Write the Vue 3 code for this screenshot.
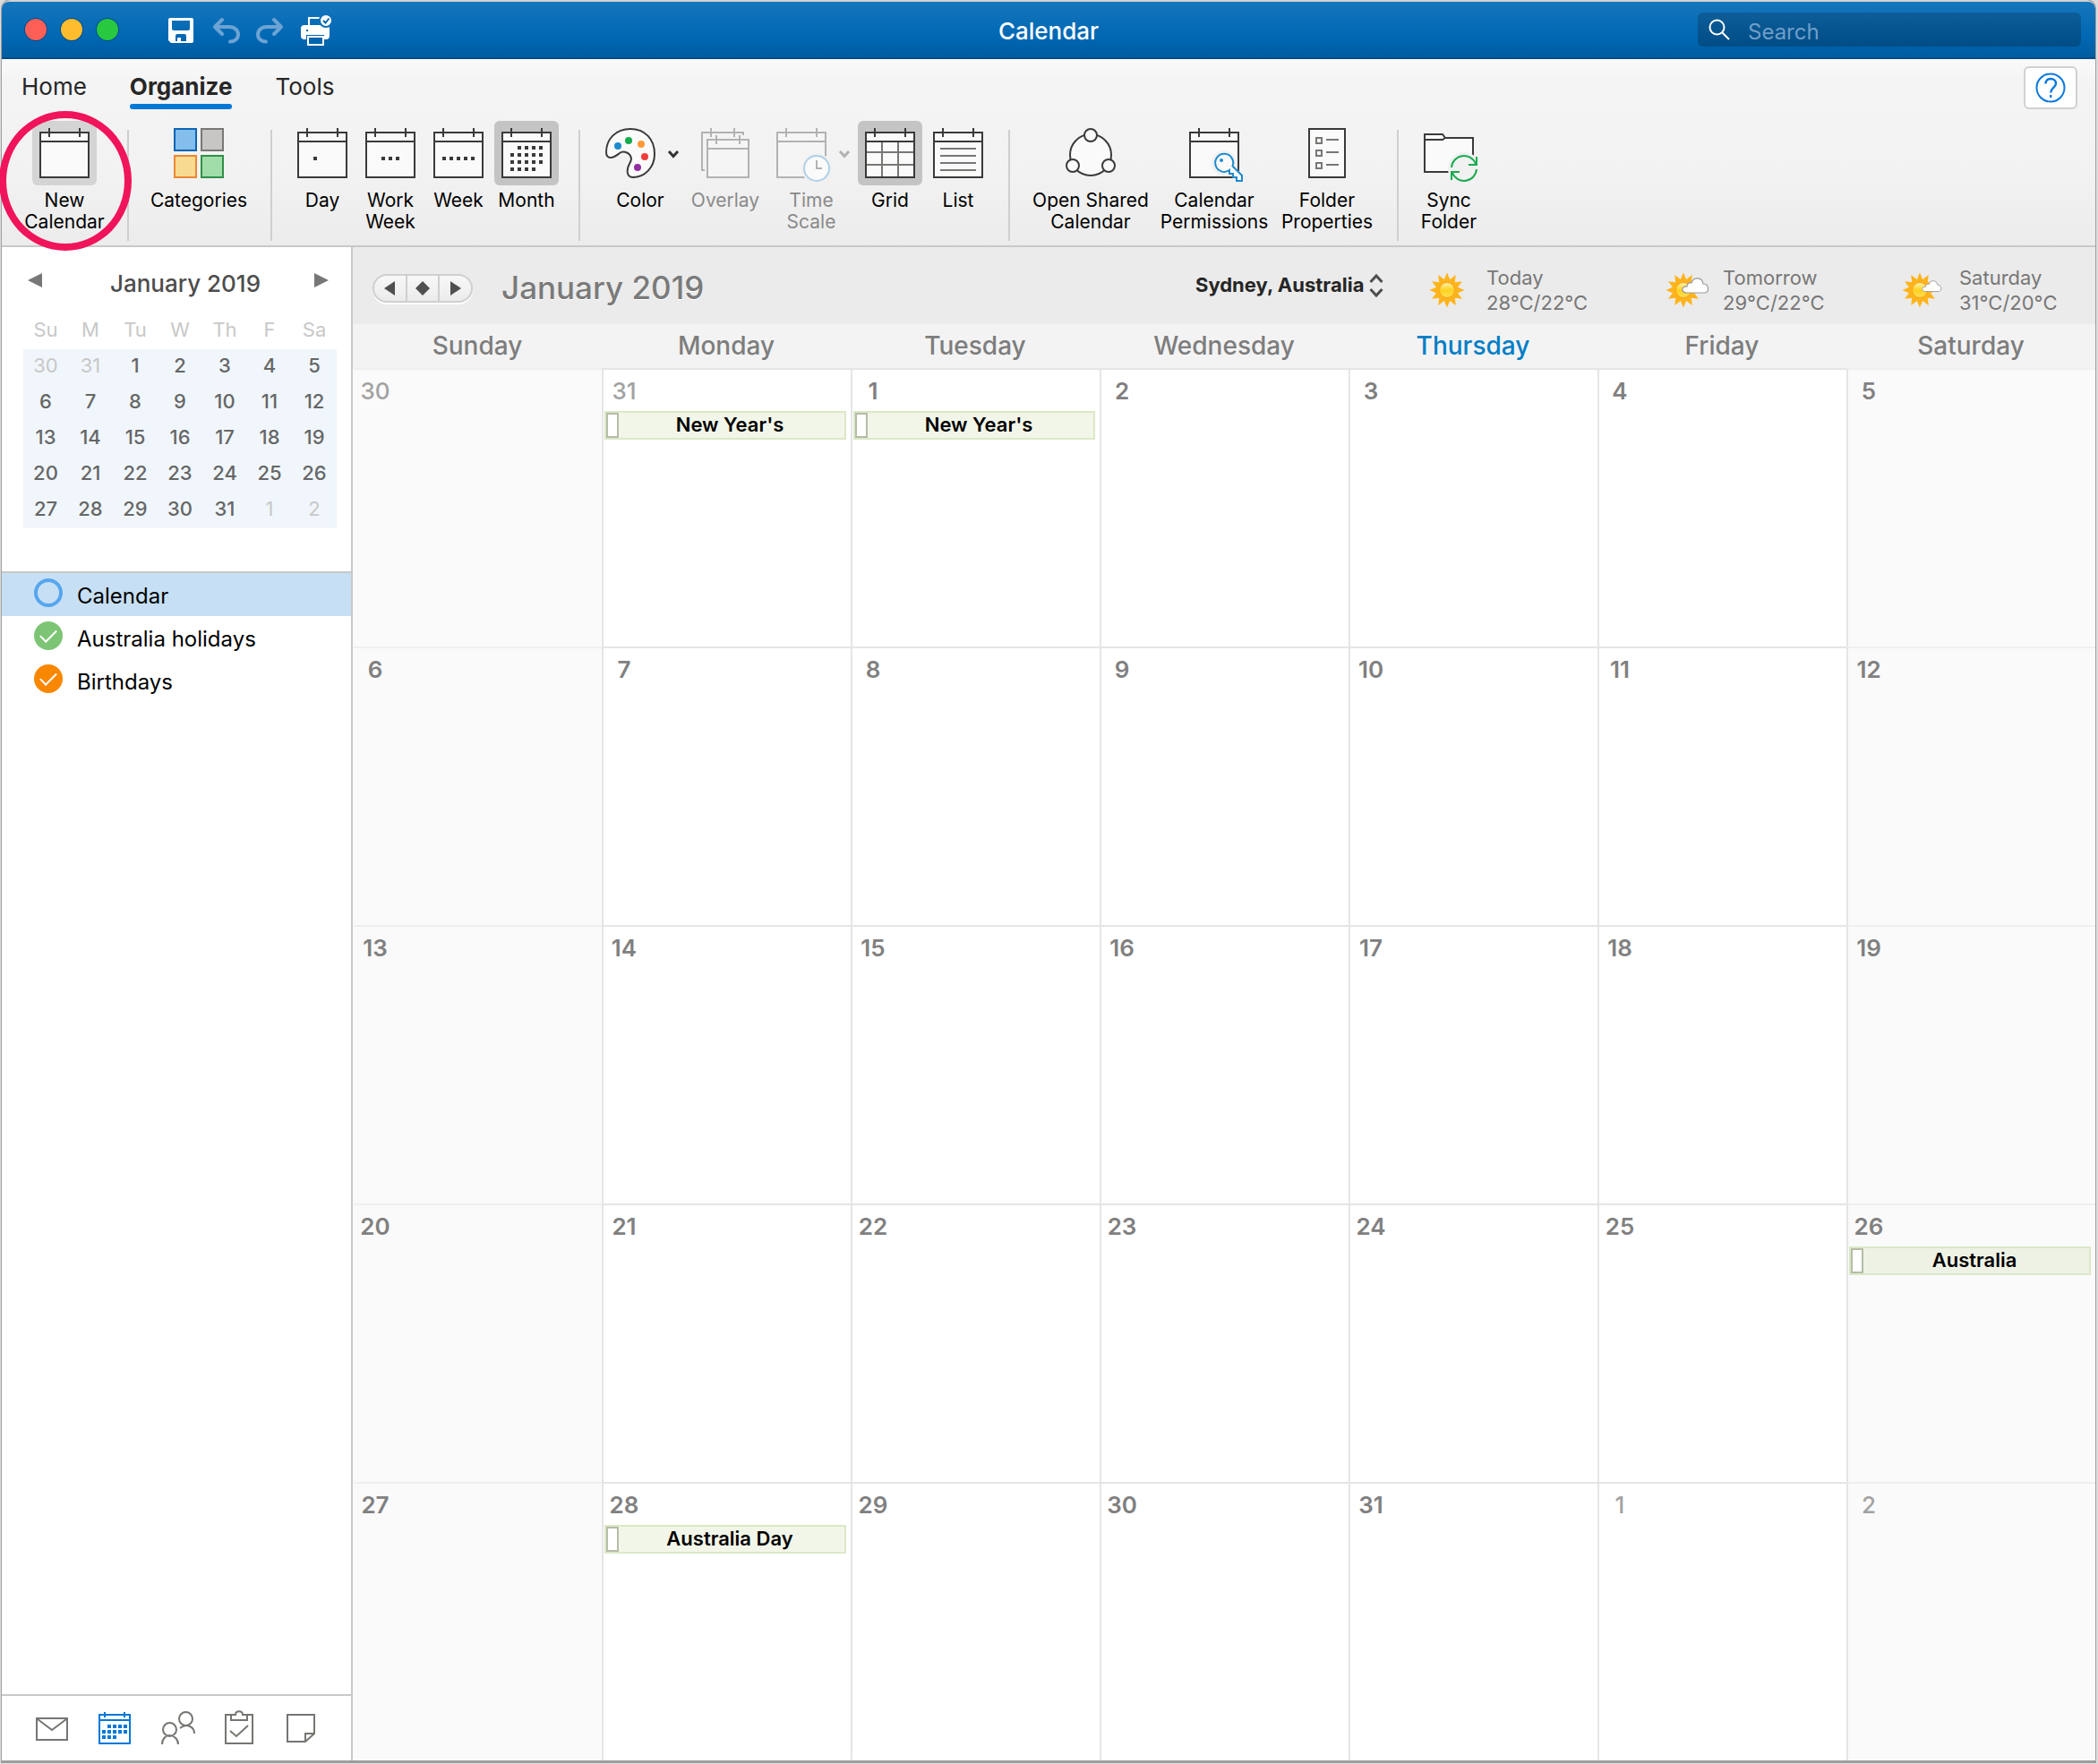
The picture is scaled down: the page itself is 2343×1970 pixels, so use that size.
<script setup>
import { ref } from 'vue'

const tabs = ['Home', 'Organize', 'Tools']
const activeTab = ref('Organize')

const dots = {
  day: [[20, 34]],
  work: [[20, 34], [28, 34], [36, 34]],
  week: [[12, 34], [20, 34], [28, 34], [36, 34], [44, 34]],
  month: [
    [20, 22], [28, 22], [36, 22], [44, 22],
    [12, 30], [20, 30], [28, 30], [36, 30], [44, 30],
    [12, 38], [20, 38], [28, 38], [36, 38], [44, 38],
    [12, 46], [20, 46], [28, 46], [36, 46]
  ]
}

const groups = [
  { name: 'create', items: [{ icon: 'new', lines: ['New', 'Calendar'], hover: true }] },
  { name: 'tags', items: [{ icon: 'categories', lines: ['Categories'] }] },
  {
    name: 'range',
    items: [
      { icon: 'day', lines: ['Day'] },
      { icon: 'work', lines: ['Work', 'Week'] },
      { icon: 'week', lines: ['Week'] },
      { icon: 'month', lines: ['Month'], on: true }
    ]
  },
  {
    name: 'view',
    items: [
      { icon: 'color', lines: ['Color'], menu: true },
      { icon: 'overlay', lines: ['Overlay'], off: true },
      { icon: 'scale', lines: ['Time', 'Scale'], off: true, menu: true },
      { icon: 'grid', lines: ['Grid'], on: true },
      { icon: 'list', lines: ['List'] }
    ]
  },
  {
    name: 'share',
    items: [
      { icon: 'shared', lines: ['Open Shared', 'Calendar'] },
      { icon: 'permissions', lines: ['Calendar', 'Permissions'] },
      { icon: 'properties', lines: ['Folder', 'Properties'] }
    ]
  },
  { name: 'sync', items: [{ icon: 'sync', lines: ['Sync', 'Folder'] }] }
]
const plainCalendars = ['new', 'day', 'work', 'week', 'month', 'scale', 'grid', 'list', 'permissions']

const events = { 1: "New Year's", 2: "New Year's", 27: 'Australia', 29: 'Australia Day' }
const weeks = Array.from({ length: 5 }, (_, w) =>
  Array.from({ length: 7 }, (_, d) => {
    const index = w * 7 + d
    const date = new Date(2018, 11, 30 + index)
    return {
      index,
      day: date.getDate(),
      outside: date.getMonth() !== 0,
      weekend: d === 0 || d === 6,
      event: events[index]
    }
  })
)
const shortDays = ['Su', 'M', 'Tu', 'W', 'Th', 'F', 'Sa']
const longDays = ['Sunday', 'Monday', 'Tuesday', 'Wednesday', 'Thursday', 'Friday', 'Saturday']

const calendars = ref([
  { name: 'Calendar', tone: 'blue', shown: false },
  { name: 'Australia holidays', tone: 'green', shown: true },
  { name: 'Birthdays', tone: 'orange', shown: true }
])

const forecast = [
  { day: 'Today', temp: '28°C/22°C', cloud: null },
  { day: 'Tomorrow', temp: '29°C/22°C', cloud: 'translate(17 6)' },
  { day: 'Saturday', temp: '31°C/20°C', cloud: 'translate(21 9) scale(.74)' }
]
const sunRays = Array.from({ length: 24 }, (_, i) => {
  const r = i % 2 ? 12.5 : 19.5
  const a = (i * Math.PI) / 12
  return `${(19 + r * Math.sin(a)).toFixed(1)},${(20 - r * Math.cos(a)).toFixed(1)}`
}).join(' ')

const modules = ['Mail', 'Calendar', 'People', 'Tasks', 'Notes']
</script>

<template>
  <div class="window">
    <header class="titlebar">
      <div class="lights">
        <button class="light red" aria-label="Close"></button>
        <button class="light yellow" aria-label="Minimize"></button>
        <button class="light green" aria-label="Zoom"></button>
      </div>
      <div class="quick">
        <button aria-label="Save">
          <svg width="30" height="28" viewBox="0 0 30 28"><path fill="#fff" fill-rule="evenodd" d="M2 0H26a2 2 0 0 1 2 2V26a2 2 0 0 1-2 2H3L0 25V2A2 2 0 0 1 2 0ZM4 3V12a2 2 0 0 0 2 2H22a2 2 0 0 0 2-2V3ZM8 26H10V22H14V26H20V20a2 2 0 0 0-2-2H10a2 2 0 0 0-2 2Z" /></svg>
        </button>
        <button aria-label="Undo">
          <svg width="32" height="28" viewBox="0 0 32 28" class="faded"><path d="M12 2 4 10l8 8M5 10H20c6 0 10 4 10 8.500s-4 8-9 8" /></svg>
        </button>
        <button aria-label="Redo">
          <svg width="32" height="28" viewBox="0 0 32 28" class="faded"><path d="M20 2l8 8-8 8M27 10H12c-6 0-10 4-10 8.500s4 8 9 8" /></svg>
        </button>
        <button aria-label="Print">
          <svg width="34" height="36" viewBox="0 0 34 36" fill="none" stroke="#fff">
            <path stroke-width="2" d="M9 13V4H24" />
            <rect x="1" y="13" width="30" height="14" rx="3" stroke-width="2" fill="#fff" />
            <path stroke="#0067b2" stroke-width="2" d="M6 18h2" />
            <rect x="7" y="24" width="18" height="10" stroke="#0064ae" stroke-width="2" />
            <rect x="8" y="25" width="17" height="9" stroke-width="2" fill="#0064ae" />
            <circle cx="28" cy="7" r="7" fill="#fff" stroke="#0c6fb8" stroke-width="2" />
            <path stroke="#0067b2" stroke-width="2" d="M25 7l2.500 2.500L31.500 4.500" />
          </svg>
        </button>
      </div>
      <h1>Calendar</h1>
      <label class="search">
        <svg width="24" height="24" viewBox="0 0 24 24" fill="none" stroke="#fff" stroke-width="2"><circle cx="9.500" cy="9.500" r="8" /><path d="M15.500 15.500 23 23" /></svg>
        <input type="search" placeholder="Search" aria-label="Search" />
      </label>
    </header>

    <div class="ribbon">
      <div class="tabrow">
        <nav class="tabs">
          <button v-for="t in tabs" :key="t" :class="{ active: t === activeTab }" @click="activeTab = t">{{ t }}</button>
        </nav>
        <button class="help" aria-label="Help">
          <svg width="34" height="34" viewBox="0 0 34 34" fill="none" stroke="#0a78dc" stroke-width="2"><circle cx="17" cy="17" r="15.500" /><path stroke-width="2.400" d="M11.500 12.500C11.500 9 14 7 17.200 7s5.800 2 5.800 5.200c0 4.500-5.800 5-5.800 10.300M17.200 25v3" /></svg>
        </button>
      </div>

      <div class="tools">
        <div v-for="g in groups" :key="g.name" class="group" :class="'group-' + g.name">
          <button v-for="it in g.items" :key="it.icon" class="tool" :class="['tool-' + it.icon, { on: it.on, hover: it.hover, menu: it.menu }]" :disabled="it.off">
            <span class="pic">
              <svg width="56" height="60" viewBox="0 0 56 60">
                <template v-if="plainCalendars.includes(it.icon)">
                  <path class="sheet" d="M1 5H55V55H1ZM1 15H55M11 0V10M45 0V10" />
                  <rect v-for="(p, i) in dots[it.icon] || []" :key="i" class="dot" :x="p[0] - 2" :y="p[1] - 2" width="4" height="4" />
                </template>
                <template v-if="it.icon === 'categories'">
                  <rect x="1" y="1" width="24" height="24" fill="#83beec" stroke="#0c64b4" stroke-width="2" />
                  <rect x="31" y="1" width="24" height="24" fill="#c8c6c4" stroke="#7a7876" stroke-width="2" />
                  <rect x="1" y="31" width="24" height="24" fill="#f8db8f" stroke="#ed8733" stroke-width="2" />
                  <rect x="31" y="31" width="24" height="24" fill="#a1dda9" stroke="#309048" stroke-width="2" />
                </template>
                <template v-if="it.icon === 'color'">
                  <path class="sheet" d="M1 27C1 12 12 1 28 1C44 1 55 12 55 29C55 44 44 55 31 55C25 55 24 50 25 45C26 40 29 38 29 34C28 27 20 25 16 28C12 31 10 33 6 33C2 33 1 30 1 27Z" />
                  <circle cx="14" cy="20" r="4" fill="#1e8bcd" /><circle cx="26" cy="14" r="4" fill="#18ab50" />
                  <circle cx="40" cy="18" r="4" fill="#ff9a37" /><circle cx="44" cy="32" r="4" fill="#ee3d3b" />
                  <circle cx="36" cy="44" r="4" fill="#922fa0" />
                </template>
                <template v-if="it.icon === 'overlay'">
                  <path class="line" d="M5 47H2V5H48V8M12 0V10M38 0V10" />
                  <path class="sheet" d="M8 13H54V55H8ZM8 23H54M18 8V18M44 8V18" />
                </template>
                <template v-if="it.icon === 'scale'">
                  <circle cx="45" cy="45" r="17" fill="#f1f1f1" />
                  <circle cx="45" cy="45" r="14" fill="#fafafa" stroke="#b0d0e8" stroke-width="2" />
                  <path class="line" d="M45 36V45H51" />
                </template>
                <path v-if="it.icon === 'grid'" class="inner" d="M19 16V54M37 16V54M2 27H54M2 41H54" />
                <path v-if="it.icon === 'list'" class="inner" d="M8 23H48M8 31H48M8 39H48M8 47H48" />
                <template v-if="it.icon === 'shared'">
                  <circle class="sheet" cx="28" cy="30" r="23" />
                  <circle class="sheet" cx="28" cy="8" r="7" /><circle class="sheet" cx="8" cy="42" r="7" /><circle class="sheet" cx="48" cy="42" r="7" />
                </template>
                <template v-if="it.icon === 'permissions'">
                  <path stroke="#f1f1f1" stroke-width="8" fill="none" d="M39 39m-10 0a10 10 0 1 0 20 0a10 10 0 1 0-20 0M47 46 60 58" />
                  <path fill="#fafafa" stroke="#1e8bcd" stroke-width="2" d="M48.500 42.500A10 10 0 1 0 45 47V51H49V55H53V59H59V53Z" />
                  <circle cx="36" cy="36" r="2" fill="#1e8bcd" />
                </template>
                <template v-if="it.icon === 'properties'">
                  <rect class="sheet" x="8" y="1" width="40" height="54" />
                  <path class="inner" d="M16 11H22V17H16ZM16 25H22V31H16ZM16 39H22V45H16ZM27 13H41M27 27H41M27 41H41" />
                </template>
                <template v-if="it.icon === 'sync'">
                  <path class="sheet" d="M1 49V7H21L24 11H55V49ZM1 13H21L24 11" />
                  <circle cx="45" cy="45" r="18" fill="#f1f1f1" />
                  <path fill="none" stroke="#18ab50" stroke-width="2" d="M31 44A14 14 0 0 1 58 40M59 46A14 14 0 0 1 32 50M59 32V41H50M31 58V49H40" />
                </template>
              </svg>
              <svg v-if="it.menu" class="caret" width="12" height="10" viewBox="0 0 12 10"><path d="M1 2 6 7.500 11 2" /></svg>
            </span>
            <span v-for="l in it.lines" :key="l" class="cap">{{ l }}</span>
          </button>
        </div>
      </div>
      <span class="highlight"></span>
    </div>

    <div class="body">
      <aside class="sidebar">
        <div class="minihead">
          <button aria-label="Previous month"><svg width="16" height="16" viewBox="0 0 16 16"><path d="M16 0V16L0 8Z" /></svg></button>
          <h2>January 2019</h2>
          <button aria-label="Next month"><svg width="16" height="16" viewBox="0 0 16 16"><path d="M0 0V16L16 8Z" /></svg></button>
        </div>
        <table class="mini">
          <thead>
            <tr><th v-for="d in shortDays" :key="d">{{ d }}</th></tr>
          </thead>
          <tbody>
            <tr v-for="(w, i) in weeks" :key="i">
              <td v-for="c in w" :key="c.index" :class="{ outside: c.outside }">{{ c.day }}</td>
            </tr>
          </tbody>
        </table>
        <ul class="calendars">
          <li v-for="(c, i) in calendars" :key="c.name" :class="{ selected: i === 0 }">
            <label :class="c.tone">
              <input v-model="c.shown" type="checkbox" />
              <span>{{ c.name }}</span>
            </label>
          </li>
        </ul>
        <nav class="modules">
          <button v-for="m in modules" :key="m" :aria-label="m" :class="{ current: m === 'Calendar' }">
            <svg width="38" height="40" viewBox="0 0 38 40" fill="none" stroke="currentColor" stroke-width="2">
              <path v-if="m === 'Mail'" d="M2 9H36V33H2ZM3 10 19 22 35 10" />
              <template v-if="m === 'Calendar'">
                <path d="M2 5H36V37H2ZM2 11H36M8 2V8M30 2V8" />
                <path stroke-width="4" stroke-dasharray="4 2" d="M11 18H34M5 24H34M5 30H21" />
              </template>
              <path v-if="m === 'People'" d="M2 38C2 32 6 28 10.500 28S20 32 20 38M3 21.500a7.500 7.500 0 1 0 15 0a7.500 7.500 0 1 0-15 0M21 9.500a7.500 7.500 0 1 0 15 0a7.500 7.500 0 1 0-15 0M22 20C29 14 38 18 38 26" />
              <path v-if="m === 'Tasks'" d="M8 5H3V37H33V5H27M9 5H14C14 0 22 0 22 5H27V11H9ZM8 23 15 29 28 17" />
              <path v-if="m === 'Notes'" d="M2 5H32V26L22 35H2ZM22 35V26H32" />
            </svg>
          </button>
        </nav>
      </aside>

      <main>
        <div class="viewhead">
          <div class="pager">
            <button aria-label="Previous"><svg width="12" height="16" viewBox="0 0 12 16"><path d="M12 0V16L0 8Z" /></svg></button>
            <button aria-label="Today"><svg width="16" height="16" viewBox="0 0 16 16"><path d="M8 0 16 8 8 16 0 8Z" /></svg></button>
            <button aria-label="Next"><svg width="12" height="16" viewBox="0 0 12 16"><path d="M0 0V16L12 8Z" /></svg></button>
          </div>
          <h2>January 2019</h2>
          <label class="place">
            <select aria-label="Weather location"><option>Sydney, Australia</option></select>
            <svg width="16" height="26" viewBox="0 0 16 26"><path d="M1.500 9 8 2l6.500 7M1.500 17 8 24l6.500-7" /></svg>
          </label>
          <div class="forecast">
            <div v-for="f in forecast" :key="f.day" class="outlook">
              <svg width="48" height="40" viewBox="0 0 48 40">
                <defs>
                  <linearGradient id="disc" x1="0" y1="0" x2="0" y2="1"><stop offset="0" stop-color="#fff3b0" /><stop offset=".5" stop-color="#ffd21f" /><stop offset="1" stop-color="#ffdf57" /></linearGradient>
                </defs>
                <polygon :points="sunRays" fill="#fdb41c" />
                <circle cx="19" cy="20" r="8.500" fill="url(#disc)" stroke="#f7a31a" />
                <path v-if="f.cloud" :transform="f.cloud" fill="#fff" stroke="#999" stroke-width="1.200" d="M5 17C-1 16 0 9 6 10C6 6 9 5 11 6C13-1 23-1 24 7C31 7 31 16 26 17Z" />
              </svg>
              <p>{{ f.day }}<br />{{ f.temp }}</p>
            </div>
          </div>
        </div>
        <table class="month">
          <thead>
            <tr><th v-for="d in longDays" :key="d" :class="{ today: d === 'Thursday' }">{{ d }}</th></tr>
          </thead>
          <tbody>
            <tr v-for="(w, i) in weeks" :key="i">
              <td v-for="c in w" :key="c.index" :class="{ outside: c.outside, weekend: c.weekend }">
                <span class="num">{{ c.day }}</span>
                <div v-if="c.event" class="event"><i></i><span>{{ c.event }}</span></div>
              </td>
            </tr>
          </tbody>
        </table>
      </main>
    </div>
  </div>
</template>

<style>
body {
  background: #dcdcdc;
}
</style>

<style scoped>
* {
  box-sizing: border-box;
}
.window {
  display: flex;
  flex-direction: column;
  min-height: calc(100vh - 4px);
  margin: 0 3px 2px 2px;
  border-top: 2px solid #d2d2d2;
  border-bottom: 2px solid #9c9c9c;
  border-radius: 10px 10px 0 0;
  box-shadow: 0 0 0 1px #a0a0a0;
  font-family: Inter, "Liberation Sans", sans-serif;
  background: #fff;
}
button {
  padding: 0;
  border: 0;
  background: none;
  font: inherit;
  color: inherit;
}
h1,
h2,
p,
ul {
  margin: 0;
  padding: 0;
}
svg {
  display: block;
  overflow: visible;
}

.titlebar {
  display: grid;
  grid-template-columns: 1fr auto 1fr;
  grid-template-areas: "left title search";
  align-items: center;
  height: 64px;
  padding: 0 16px;
  border-bottom: 2px solid #004c86;
  border-radius: 8px 8px 0 0;
  background: linear-gradient(#1576bc, #0067b3 65%, #005c9f);
}
.lights {
  grid-area: left;
  display: flex;
  gap: 16px;
  margin-left: 10px;
}
.light {
  width: 24px;
  height: 24px;
  border-radius: 50%;
  box-shadow: 0 0 0 1px rgba(0, 50, 100, 0.5);
}
.red { background: #ff5f57; }
.yellow { background: #ffbd2e; }
.light.green { background: #28c940; }
.quick {
  grid-area: left;
  display: flex;
  align-items: center;
  gap: 18px;
  margin-left: 170px;
  padding-top: 2px;
}
.faded {
  fill: none;
  stroke: #6ca3d3;
  stroke-width: 4;
  stroke-linecap: round;
  stroke-linejoin: round;
}
h1 {
  grid-area: title;
  padding-top: 4px;
  font-size: 26px;
  font-weight: 500;
  line-height: 32px;
  color: #fff;
}
.search {
  grid-area: search;
  justify-self: end;
  display: flex;
  align-items: center;
  gap: 20px;
  width: 428px;
  height: 38px;
  padding: 0 12px;
  border-radius: 6px;
  background: linear-gradient(#0d5d99, #004d86);
}
.search input {
  flex: 1;
  min-width: 0;
  padding: 4px 0 0;
  border: 0;
  outline: 0;
  background: none;
  font: 24px Inter, sans-serif;
  color: #fff;
}
.search input::placeholder {
  color: #6f9ec9;
}

.ribbon {
  position: relative;
  border-bottom: 2px solid #c8c8c8;
  background: linear-gradient(#fafafa, #f4f4f4 12%, #f2f2f2 60%, #ececec);
}
.tabrow {
  display: flex;
  justify-content: space-between;
  align-items: flex-start;
  height: 69px;
  padding: 8px 20px 0 22px;
}
.tabs {
  display: flex;
  gap: 48px;
}
.tabs button {
  height: 48px;
  padding: 4px 0 0;
  border-bottom: 6px solid transparent;
  font-size: 26px;
  line-height: 32px;
  color: #262626;
}
.tabs .active {
  position: relative;
  font-weight: 700;
}
.tabs .active::after {
  content: "";
  position: absolute;
  left: 0;
  right: 0;
  bottom: -6px;
  height: 6px;
  border-radius: 3px;
  background: #0078d7;
}
.help {
  display: grid;
  place-items: center;
  width: 60px;
  height: 48px;
  border: 2px solid #d0d0d0;
  border-radius: 6px;
  background: #fff;
}
.tools {
  display: flex;
  height: 139px;
}
.group {
  display: flex;
  position: relative;
}
.group:not(:last-child)::after {
  content: "";
  position: absolute;
  top: 10px;
  right: 0;
  width: 2px;
  height: 124px;
  background: #cfcfcf;
}
.group-create { padding: 0 34px 0 32px; }
.group-tags { padding: 0 22px 0 18px; }
.group-range { padding: 0 22px 0 18px; }
.group-view { padding: 0 20px 0 18px; }
.group-share { padding: 0 22px 0 20px; }
.group-sync { padding: 0 18px; }
.tool {
  display: flex;
  flex-direction: column;
  align-items: center;
  width: 76px;
  font-size: 21px;
  line-height: 24px;
  color: #000;
}
.tool-categories { width: 120px; }
.tool-color { width: 98px; }
.tool-scale { width: 100px; }
.tool-overlay { width: 92px; }
.tool-shared { width: 140px; }
.tool-permissions { width: 136px; }
.tool-properties { width: 116px; }
.tool:disabled { color: #8a8a8a; }
.pic {
  display: flex;
  align-items: flex-start;
  height: 72px;
  margin-bottom: 5px;
  padding: 8px;
  border-radius: 6px;
}
.menu .pic { padding-right: 4px; }
.on .pic { background: #c4c4c4; }
.hover .pic { background: #d4d4d4; }
.caret {
  margin: 24px 0 0 14px;
  fill: none;
  stroke: #333;
  stroke-width: 3;
}
.sheet {
  fill: #fafafa;
  stroke: #3a3a38;
  stroke-width: 2;
}
.line {
  fill: none;
  stroke: #3a3a38;
  stroke-width: 2;
}
.inner {
  fill: none;
  stroke: #797774;
  stroke-width: 2;
}
.dot { fill: #3a3a38; }
:disabled .sheet,
:disabled .line,
:disabled .caret { stroke: #b2b2b2; }
:disabled .sheet { fill: #f5f5f5; }
.cap { white-space: nowrap; }
.highlight {
  position: absolute;
  left: -3px;
  top: 58px;
  z-index: 1;
  width: 148px;
  height: 156px;
  border: 8px solid #f0145a;
  border-radius: 50%;
  pointer-events: none;
}

.body {
  flex: 1;
  display: flex;
}
.sidebar {
  flex: 0 0 392px;
  display: flex;
  flex-direction: column;
  border-right: 2px solid #c8c8c8;
}
.minihead {
  display: flex;
  align-items: flex-start;
  padding: 25px 25px 0 29px;
}
.minihead button { padding-top: 4px; }
.minihead svg { fill: #777; }
.minihead h2 {
  flex: 1;
  padding-left: 16px;
  font-size: 26px;
  font-weight: 500;
  line-height: 32px;
  text-align: center;
  color: #4d4d4d;
}
.mini {
  width: 350px;
  margin: 14px 0 48px 24px;
  border-spacing: 0;
  table-layout: fixed;
  font-size: 22px;
  line-height: 24px;
  text-align: center;
}
.mini th {
  height: 43px;
  padding: 0 0 2px;
  font-weight: 400;
  color: #c8c8c8;
}
.mini td {
  height: 40px;
  padding: 0 0 5px;
  background: #f0f6fb;
  font-weight: 500;
  color: #666;
}
.mini .outside {
  font-weight: 400;
  color: #c8c8c8;
}
.calendars {
  list-style: none;
  border-top: 2px solid #c8c8c8;
}
.calendars label {
  display: flex;
  align-items: center;
  gap: 16px;
  height: 48px;
  padding-left: 36px;
  font-size: 24px;
  line-height: 32px;
  color: #000;
}
.calendars span { padding-top: 3px; }
.calendars input {
  appearance: none;
  display: grid;
  place-items: center;
  width: 32px;
  height: 32px;
  margin: 0 0 4px;
  border: 4px solid currentColor;
  border-radius: 50%;
}
.calendars input:checked { background: currentColor; }
.calendars input:checked::after {
  content: "";
  width: 16px;
  height: 8px;
  margin-bottom: 4px;
  border: solid #fff;
  border-width: 0 0 2px 2px;
  transform: rotate(-45deg);
}
.blue input { color: #55a6ee; }
.green input { color: #7dc575; }
.orange input { color: #f98700; }
.selected {
  background: #c7dff4;
}
.modules {
  display: flex;
  align-items: center;
  height: 74px;
  margin-top: auto;
  padding-left: 21px;
  border-top: 2px solid #c8c8c8;
  color: #767571;
}
.modules button {
  display: grid;
  place-items: center;
  width: 70px;
  height: 72px;
}
.modules .current { color: #0078d7; }

main {
  flex: 1;
  min-width: 0;
  background: #f3f3f3;
}
.viewhead {
  display: flex;
  align-items: center;
  height: 86px;
  padding: 0 13px 0 22px;
  background: #ebebeb;
}
.pager {
  display: flex;
  width: 112px;
  height: 32px;
  margin-top: 6px;
  border: 2px solid #cfcfcf;
  border-radius: 16px;
  background: linear-gradient(#f8f8f8, #ebebeb);
  box-shadow: 0 2px 0 #fff;
}
.pager button {
  flex: 1;
  display: grid;
  place-items: center;
}
.pager button + button { border-left: 2px solid #cfcfcf; }
.pager svg { fill: #505050; }
.viewhead h2 {
  margin: 4px 0 0 32px;
  font-size: 35px;
  font-weight: 500;
  line-height: 44px;
  color: #7a7a7a;
  text-shadow: 0 1px 0 #fff;
}
.place {
  display: flex;
  align-items: center;
  gap: 4px;
  margin: 0 52px 0 auto;
}
.place select {
  appearance: none;
  padding: 0 0 2px;
  border: 0;
  background: none;
  font: 700 22px/28px Inter, sans-serif;
  color: #262626;
}
.place path {
  fill: none;
  stroke: #4d4d4d;
  stroke-width: 3;
}
.forecast {
  display: flex;
  gap: 62px;
}
.outlook {
  display: flex;
  align-items: center;
  gap: 15px;
  width: 202px;
  padding-top: 9px;
  font-size: 22px;
  line-height: 28px;
  color: #777;
  white-space: nowrap;
}

.month {
  width: 100%;
  border-spacing: 0;
  table-layout: fixed;
}
.month th {
  height: 49px;
  padding: 0 0 2px;
  font-size: 28px;
  font-weight: 500;
  line-height: 32px;
  color: #7d7d7d;
}
.month .today { color: #007dc5; }
.month td {
  height: 311px;
  padding: 8px 5px 0 1px;
  border-top: 2px solid #e5e5e5;
  border-left: 2px solid #e5e5e5;
  background: #fff;
  vertical-align: top;
  font-size: 26px;
  font-weight: 600;
  line-height: 32px;
  color: #808080;
}
.month .weekend {
  border-top-color: #efefef;
  background: #fafafa;
}
.month td:first-child { border-left-color: #fafafa; }
.month .outside {
  font-weight: 500;
  color: #a2a2a2;
}
.num {
  display: block;
  width: 44px;
  text-align: center;
}
.event {
  display: flex;
  height: 32px;
  margin-top: 6px;
  border: 2px solid #dbe8c6;
  background: #f2f6e8;
  font-size: 22px;
  font-weight: 600;
  line-height: 26px;
  color: #000;
}
.weekend .event { background: #eef2e5; }
.event i {
  width: 14px;
  border: 2px solid #b5bca7;
  background: #fff;
}
.event span {
  flex: 1;
  padding-right: 4px;
  text-align: center;
}
</style>
